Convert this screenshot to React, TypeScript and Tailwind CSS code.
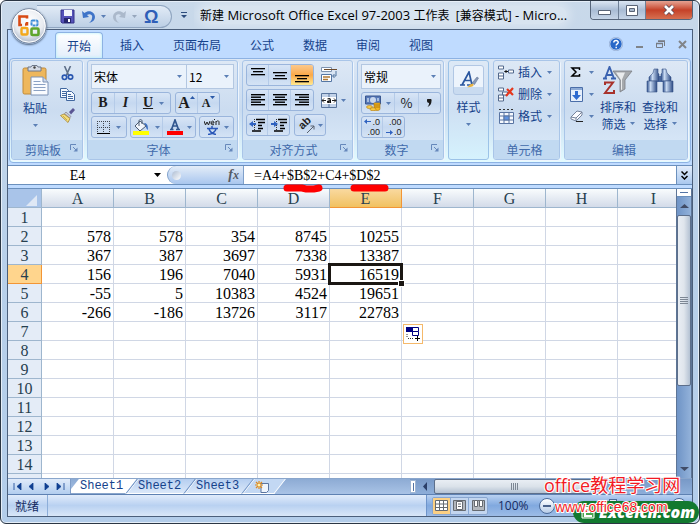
import type { ComponentType, ReactNode } from "react";
import clsx from "clsx";

// --- Sheet data ------------------------------------------------------------------
const columns = ["A", "B", "C", "D", "E", "F", "G", "H", "I"];
const lastRow = 14;
// One spare, unnumbered row runs under the sheet tabs.
const rowNumbers = Array.from({ length: lastRow + 1 }, (_, i) => i + 1);
const cells: Record<number, number[]> = {
  2: [578, 578, 354, 8745, 10255],
  3: [367, 387, 3697, 7338, 13387],
  4: [156, 196, 7040, 5931, 16519],
  5: [-55, 5, 10383, 4524, 19651],
  6: [-266, -186, 13726, 3117, 22783],
};

const ribbonTabs = ["开始", "插入", "页面布局", "公式", "数据", "审阅", "视图"];
const sheetTabs = ["Sheet1", "Sheet2", "Sheet3"];

// --- Small shared pieces ---------------------------------------------------------
function Caret({ className = "text-[#5b7fb5]" }: { className?: string }) {
  return (
    <svg aria-hidden="true" className={clsx("h-[3px] w-[5px] shrink-0", className)} viewBox="0 0 5 3">
      <path d="M0 0h5L2.5 3z" fill="currentColor" />
    </svg>
  );
}

function ToolButton({
  label,
  className,
  children,
}: {
  label: string;
  className?: string;
  children: ReactNode;
}) {
  return (
    <button
      aria-label={label}
      className={clsx("flex h-full items-center justify-center", className)}
      type="button"
    >
      {children}
    </button>
  );
}

function ButtonBar({ children }: { children: ReactNode }) {
  return (
    <div className="flex h-[22px] divide-x divide-[#b5cbe8] overflow-hidden rounded-[3px] border border-[#9ab5dc] bg-linear-to-b from-[#d8e5f6] via-[#c5d8f0] to-[#d4e3f5]">
      {children}
    </div>
  );
}

function Group({
  title,
  launcher = false,
  className,
  children,
}: {
  title: string;
  launcher?: boolean;
  className?: string;
  children: ReactNode;
}) {
  return (
    <section
      className={clsx(
        "flex h-[100px] shrink-0 flex-col overflow-hidden rounded-[3px] border border-[#a9c5e8] bg-linear-to-b from-[#dde8f5] via-[#cbdcf0] to-[#dcebfa] shadow-[1px_1px_0_#eef5fd]",
        className,
      )}
    >
      <div className="min-h-0 flex-1 px-[3px] pt-[3px]">{children}</div>
      <div className="flex h-[19px] items-center bg-[#c1d9f1] pr-1">
        <h2 className={clsx("flex-1 text-center text-[12px] leading-4 text-[#3f6aab]", launcher && "pl-1")}>
          {title}
        </h2>
        {launcher && (
          <button aria-label={`${title}设置`} className="mb-1" type="button">
            <svg className="size-2" viewBox="0 0 8 8" fill="none" stroke="#6688bb">
              <path d="M.5 6V.5H6" />
              <path d="M3 3l3 3" />
              <path d="M7.5 3.5v4h-4z" fill="#6688bb" stroke="none" />
            </svg>
          </button>
        )}
      </div>
    </section>
  );
}

function Combo({ label, value, className }: { label: string; value: string; className?: string }) {
  return (
    <div className={clsx("relative flex h-[25px] border border-[#b3c7e1] bg-[#eaf2fb]", className)}>
      <select
        aria-label={label}
        className="w-full appearance-none bg-transparent pl-0.5 text-[12px] leading-5 text-black outline-none"
        defaultValue={value}
      >
        <option>{value}</option>
      </select>
      <span className="pointer-events-none absolute top-[10px] right-1 flex">
        <Caret />
      </span>
    </div>
  );
}

// --- Icons -----------------------------------------------------------------------
function OfficeLogo() {
  return (
    <svg className="size-9" viewBox="0 0 36 36" fill="none">
      <defs>
        <radialGradient id="orb" cx=".5" cy=".35" r=".7">
          <stop offset="0" stopColor="#fff" />
          <stop offset=".6" stopColor="#e8ebf0" />
          <stop offset="1" stopColor="#98a7bd" />
        </radialGradient>
      </defs>
      <circle cx="18" cy="18" r="17.3" fill="url(#orb)" stroke="#75859d" />
      <circle cx="18" cy="18" r="16.2" stroke="#fff" />
      <path d="M16 10.500V8.500H8.500v8.500h2.500M14 16.500h2V14" stroke="#d84a14" strokeWidth="2.600" />
      <rect x="20.500" y="12.500" width="6" height="5" rx="1" stroke="#3f8ed8" strokeWidth="2" strokeDasharray="3 .6" />
      <rect x="10.500" y="20" width="6" height="6.500" rx="1" stroke="#f3a81c" strokeWidth="2.400" />
      <rect x="20.500" y="20.500" width="7" height="6.500" rx="1" stroke="#5fa52c" strokeWidth="2.600" />
      <path d="M15.500 18.400h5M18.400 15.500v5" stroke="#fff" strokeWidth="1.200" />
    </svg>
  );
}

function SaveIcon() {
  return (
    <svg className="size-[15px]" viewBox="0 0 15 15">
      <path d="M1 1h13v13H2l-1-1z" fill="#5552b8" stroke="#34338a" />
      <path d="M4 1h8v6H4z" fill="#f1f4fb" />
      <path d="M4 9h7v5H4z" fill="#26266e" />
      <path d="M8 10h2v3H8z" fill="#fff" />
    </svg>
  );
}

function UndoIcon({ flip = false }: { flip?: boolean }) {
  return (
    <svg className={clsx("h-[14px] w-[13px]", flip && "-scale-x-100")} viewBox="0 0 13 14">
      <path
        d="M0 1l1 7 6-1-2-2c3-2 6 0 5 3 0 2-1 3-3 5 4-1 6-3 6-6C13 2 7-1 2.500 3z"
        fill={flip ? "#abb9cb" : "#3f74c8"}
      />
    </svg>
  );
}

function PasteIcon() {
  return (
    <svg className="h-[31px] w-[27px]" viewBox="0 0 27 31">
      <rect x="1" y="3" width="23" height="26" rx="1.500" fill="#eeb75c" stroke="#c08a38" />
      <path d="M6 2h3l1-1.500h5L16 2h3v4H6z" fill="#d5dbe5" stroke="#6c7789" />
      <circle cx="12.500" cy="2.500" r="1.200" fill="#444" />
      <path d="M9 12h12l5 5v13H9z" fill="#fafcff" stroke="#7d92b5" />
      <path d="M21 12v5h5" fill="#cdd9ec" stroke="#7d92b5" />
      <path d="M11.500 16.500h7m-7 3h12m-12 3h12m-12 3h12" stroke="#8ca2c4" />
    </svg>
  );
}

function CutIcon() {
  return (
    <svg className="h-[15px] w-[13px]" viewBox="0 0 13 15" fill="none">
      <path d="M3.500 0l4 9M9.500 0l-4 9" stroke="#5f7089" strokeWidth="1.600" />
      <circle cx="3.500" cy="11.300" r="2.200" stroke="#2a57b0" strokeWidth="1.700" />
      <circle cx="9.500" cy="11" r="2.200" stroke="#2a57b0" strokeWidth="1.700" />
    </svg>
  );
}

function CopyIcon() {
  return (
    <svg className="h-[13px] w-[15px]" viewBox="0 0 15 13" stroke="#41679f">
      <path d="M.5.5h6l2 2v7h-8z" fill="#f5f9ff" />
      <path d="M2 3.500h4m-4 2h4m-4 2h4" />
      <path d="M6.500 3.500h5l3 3v6h-8z" fill="#f5f9ff" />
      <path d="M8 6.500h3m-3 2h5m-5 2h5" />
    </svg>
  );
}

function BrushIcon() {
  return (
    <svg className="size-[15px]" viewBox="0 0 15 15">
      <path d="M9 4l4-4 2 2-4 4.500z" fill="#5a5693" />
      <path d="M6 4l5 4.500-1.500 1.500L4.500 5.500z" fill="#c9ccd6" stroke="#76707c" strokeWidth=".6" />
      <path d="M4 6L.5 7.500 8 14.500l2-4z" fill="#f4de7c" stroke="#a88732" strokeWidth=".8" />
      <path d="M3 8l4 4" stroke="#a88732" strokeWidth=".6" />
    </svg>
  );
}

function BorderIcon() {
  return (
    <svg className="size-[13px]" viewBox="0 0 13 13" stroke="#41464f">
      <path d="M0 .5h13M0 6.500h13M.5 0v12M6.500 0v12M12.500 0v12" strokeDasharray="1 1" />
      <path d="M0 12.500h13" stroke="#000" />
    </svg>
  );
}

function FillColorIcon() {
  return (
    <svg className="h-4 w-4" viewBox="0 0 16 16">
      <path d="M7 2l6 5-6 5-5-5z" fill="#f2f6fc" stroke="#4b5a70" />
      <path d="M6 7V2c0-2 3-2 3 0v3" fill="none" stroke="#4b5a70" />
      <path d="M11 4c3 0 4 2 4 7-2-1-2-3-2-4z" fill="#3c6fc0" />
      <path d="M0 12h16v4H0z" fill="#ff0" />
    </svg>
  );
}

function Lines({ widths, offset = 0, align = "left" }: { widths: number[]; offset?: number; align?: string }) {
  return (
    <svg className="h-[15px] w-[14px]" viewBox="0 0 14 15" fill="#000">
      {widths.map((w, i) => (
        <rect
          height={widths.length > 4 ? 1.4 : 1.3}
          key={i}
          width={w}
          x={align === "left" ? 0 : align === "right" ? 14 - w : (14 - w) / 2}
          y={offset + i * (widths.length > 4 ? 2.5 : 3)}
        />
      ))}
    </svg>
  );
}

function IndentIcon({ right = false }: { right?: boolean }) {
  return (
    <svg className="h-[14px] w-4" viewBox="0 0 16 14">
      <path d="M7 1.500h9M9 4.500h7M9 7.500h4M9 10.500h5M3 13h9" stroke="#000" strokeWidth="1.500" />
      <path d="M5.500 1v12" stroke="#333" strokeDasharray="1 1" />
      <path d={right ? "M0 5h3V3l4 3-4 3V7H0z" : "M7 5H4V3L0 6l4 3V7h3z"} fill="#2f62c0" />
    </svg>
  );
}

function OrientationIcon() {
  return (
    <svg className="size-[18px]" viewBox="0 0 18 18">
      <text
        fill="#222"
        fontFamily="Liberation Sans, sans-serif"
        fontSize="11"
        fontWeight="bold"
        transform="rotate(-45 6 14)"
        x="5"
        y="13"
      >
        ab
      </text>
      <path d="M9 17l7-7m0 3.500V10h-3.500" fill="none" stroke="#59616e" />
    </svg>
  );
}

function WrapIcon() {
  return (
    <svg className="size-4" viewBox="0 0 16 16">
      <path d="M.5.5h10v4H.5z" fill="#fff" stroke="#7d93b0" />
      <path d="M3 2.500h13" stroke="#6b4a2c" />
      <path d="M.5 7.500h10v7H.5z" fill="#fff" stroke="#5577a4" />
      <path d="M2 10h7M2 12.500h5" stroke="#b07a36" strokeWidth="1.500" />
      <path d="M15 4v5h-3m1.500-2l-2 2 2 2" fill="none" stroke="#51749e" />
    </svg>
  );
}

function MergeIcon() {
  return (
    <svg className="h-[15px] w-4" viewBox="0 0 16 15">
      <path d="M.5.500h15v14H.5zM8 0v15" fill="#c2d2e8" stroke="#59759d" />
      <path d="M1 4h14v7H1z" fill="#fff" />
      <path d="M1 7.500h4M15 7.500h-4M3 5.500l-2 2 2 2M13 5.500l2 2-2 2" fill="none" stroke="#222" />
      <path d="M6.500 6c3-1 3 0 3 4M9.500 8c-4-.5-4 2.500 0 1" fill="none" stroke="#111" strokeWidth="1.200" />
    </svg>
  );
}

function CurrencyIcon() {
  return (
    <svg className="size-4" viewBox="0 0 16 16">
      <path d="M.5 1h15v8H.5z" fill="#5879b8" stroke="#39578f" />
      <ellipse cx="8" cy="5" rx="3" ry="3" fill="#c8d7ee" />
      <path d="M2 3h2v4H2zM12 3h2v3h-2z" fill="#a9bfe0" />
      <path d="M9 8h6v6c0 2-6 2-6 0z" fill="#f4b721" stroke="#b27b12" strokeWidth=".6" />
      <path d="M9 10h6m-6 2h6" stroke="#b27b12" />
      <ellipse cx="4.500" cy="12" rx="3" ry="1.500" fill="#f8cc47" stroke="#b27b12" strokeWidth=".6" />
      <ellipse cx="8" cy="14.200" rx="3" ry="1.500" fill="#f8cc47" stroke="#b27b12" strokeWidth=".6" />
    </svg>
  );
}

function StylesIcon() {
  return (
    <svg className="h-[18px] w-5" viewBox="0 0 20 18">
      <path d="M1 14h5M8 14h6M3 14L10 1l3 13M6 9.500h6" fill="none" stroke="#2b579f" strokeWidth="1.700" />
      <path d="M13 12l5-6 1.500 1-4 6.500z" fill="#8a9bb8" stroke="#53678c" strokeWidth=".5" />
      <path d="M8 16c2 0 3-4 6-3 2 1-1 4-6 3z" fill="#e8b23f" />
    </svg>
  );
}

function InsertCellsIcon() {
  return (
    <svg className="h-[15px] w-4" viewBox="0 0 16 15" fill="#fff" stroke="#53698c">
      <path d="M.5 1h5v3h-5zM.5 8h5v6h-5zM0 11h6M10.500 5h5v3h-5z" />
      <path d="M10 6.500H6.500M8.500 5L7 6.500 8.500 8" fill="none" stroke="#111" />
    </svg>
  );
}

function DeleteCellsIcon() {
  return (
    <svg className="h-[15px] w-4" viewBox="0 0 16 15" fill="#fff" stroke="#53698c">
      <path d="M.5 1h5v3h-5zM.5 8h5v6h-5zM0 11h6M4.500 5h5v3h-5z" />
      <path d="M9 2l6 6M15 1L8 9" stroke="#e5361c" strokeWidth="2.200" />
    </svg>
  );
}

function FormatCellsIcon() {
  return (
    <svg className="h-4 w-[17px]" viewBox="0 0 17 16" fill="none" stroke="#5974a2">
      <path d="M1 1.500h14" stroke="#333" strokeDasharray="2 2" />
      <path d="M1.500 4.500h14v11h-14z" fill="#f6f9fe" />
      <path d="M1 8h15M1 12h15M6 4v12M11 4v12" />
      <path d="M6 8h5v4H6z" fill="#5f92e0" />
    </svg>
  );
}

function FillDownIcon() {
  return (
    <svg className="h-[15px] w-[13px]" viewBox="0 0 13 15">
      <path d="M.5.5h12v14H.5z" fill="#e6effb" stroke="#4a6ea9" />
      <path d="M1 1h11v2H1z" fill="#8eabd6" />
      <path d="M5 4h3v4h3l-4.500 5L2 8h3z" fill="#2e6bd0" />
    </svg>
  );
}

function EraserIcon() {
  return (
    <svg className="h-3 w-[14px]" viewBox="0 0 14 12">
      <path d="M1 7l6-6 5 1v3l-6 6-5-2z" fill="#fbfcff" stroke="#75829a" />
      <path d="M1 7l5 1 6-6M6 8v3" fill="none" stroke="#75829a" />
      <path d="M6 11.500h7" stroke="#222" />
    </svg>
  );
}

function SortFilterIcon() {
  return (
    <svg className="h-7 w-[30px]" viewBox="0 0 30 28">
      <path d="M0 12.500h4M8 12.500h5M2 12.500L6.500 1l4.500 11.500M4 9h5" fill="none" stroke="#3a62b0" strokeWidth="1.900" />
      <path d="M2 19v-2.500h8L2 27h9v-3" fill="none" stroke="#a8322c" strokeWidth="2" />
      <path d="M10 5h19l-7 9v9l-5 3V14z" fill="#a6a9ad" stroke="#7b7f85" strokeWidth=".8" />
      <path d="M13 6.500h9l-3 7v10l-1 .6V14z" fill="#e9ebed" />
    </svg>
  );
}

function BinocularsIcon() {
  return (
    <svg className="h-[25px] w-7" viewBox="0 0 28 25">
      <defs>
        <linearGradient id="tube" x1="0" x2="1">
          <stop offset="0" stopColor="#2d4f8c" />
          <stop offset=".35" stopColor="#c8daf2" />
          <stop offset="1" stopColor="#2b4a84" />
        </linearGradient>
      </defs>
      <path d="M11 8h6v6h-6z" fill="#4a6aa2" />
      <path d="M8 1h4v4l1 1v7H3V9l4-4z" fill="url(#tube)" stroke="#3a5688" strokeWidth=".6" />
      <path d="M20 1h-4v4l-1 1v7h10V9l-4-4z" fill="url(#tube)" stroke="#3a5688" strokeWidth=".6" />
      <path d="M1 13h10v11H1z" fill="url(#tube)" stroke="#3a5688" strokeWidth=".6" />
      <path d="M17 13h10v11H17z" fill="url(#tube)" stroke="#3a5688" strokeWidth=".6" />
    </svg>
  );
}

// --- Title bar -------------------------------------------------------------------
function TitleBar() {
  return (
    <header className="relative flex h-7 shrink-0 items-start">
      <button
        aria-label="Office 按钮"
        className="absolute top-[7px] left-1 z-20 rounded-full shadow-[0_1px_2px_#51657f]"
        type="button"
      >
        <OfficeLogo />
      </button>
      <div className="mt-1 ml-[30px] flex h-[23px] w-[135px] shrink-0 items-center gap-[7px] rounded-r-full border border-l-0 border-[#8fa5c0] bg-linear-to-b from-[#e2ebf6] to-[#bccfe5] pl-[23px]">
        <ToolButton label="保存"><SaveIcon /></ToolButton>
        <ToolButton className="gap-1.5" label="撤消"><UndoIcon /><Caret /></ToolButton>
        <ToolButton className="gap-1.5" label="恢复"><UndoIcon flip /><Caret className="text-[#96a6bc]" /></ToolButton>
        <ToolButton className="text-[18px] leading-5 font-bold text-[#2f5fb8]" label="符号">
          <span className="font-['Liberation_Sans',sans-serif]">Ω</span>
        </ToolButton>
      </div>
      <ToolButton className="ml-1.5 w-3" label="自定义快速访问工具栏">
        <svg className="size-[6px]" viewBox="0 0 6 6" fill="#2d4c7d"><path d="M0 0h6v1H0zM0 3h6L3 6z" /></svg>
      </ToolButton>
      <h1 className="ml-1 h-7 min-w-0 flex-1 overflow-hidden pl-1.5 text-[13px] leading-7 whitespace-pre text-black font-['Open_Sans','Noto_Sans_CJK_SC',sans-serif]">
        <span className="rounded-full bg-white/30 shadow-[0_0_8px_4px_rgb(255_255_255/0.3)]">
          <span className="text-[12px]">新建</span>
          {" Microsoft Office Excel 97-2003 "}
          <span className="text-[12px]">{"工作表  [兼容模式]"}</span>
          {" - Micro..."}
        </span>
      </h1>
      <div className="flex h-[19px] shrink-0 overflow-hidden rounded-b-[4px] border border-t-0 border-[#56657a]">
        <button aria-label="最小化" className="flex w-7 items-center justify-center border-r border-[#6e7f96] bg-linear-to-b from-[#dbe6f3] via-[#a9bcd4] to-[#c6d5e7]" type="button">
          <svg className="h-3 w-[13px]" viewBox="0 0 13 12"><path d="M.5 6.500h12v4H.5z" fill="#fff" stroke="#5a6577" /></svg>
        </button>
        <button aria-label="还原" className="flex w-[27px] items-center justify-center border-r border-[#6e7f96] bg-linear-to-b from-[#dbe6f3] via-[#a9bcd4] to-[#c6d5e7]" type="button">
          <svg className="h-[11px] w-3" viewBox="0 0 12 11"><path d="M.5.5h11v10H.5z" fill="#fff" stroke="#5a6577" /><path d="M3.500 3.500h5v3h-5z" fill="#a9b9cd" stroke="#5a6577" /></svg>
        </button>
        <button aria-label="关闭" className="flex w-[46px] items-center justify-center bg-linear-to-b from-[#e5a292] via-[#c54128] to-[#d66f50]" type="button">
          <svg className="h-3 w-[14px]" viewBox="0 0 14 12"><path d="M3 2l8 8M11 2l-8 8" stroke="#5d4550" strokeWidth="4.500" /><path d="M3 2l8 8M11 2l-8 8" stroke="#fff" strokeWidth="2.700" /></svg>
        </button>
      </div>
    </header>
  );
}

function RibbonTabs() {
  return (
    <nav className="flex h-7 shrink-0 items-end bg-[#bfdbff] pl-[47px] text-[12px] text-[#15428b]">
      {ribbonTabs.map((tab, i) => (
        <button
          className={clsx(
            "h-[26px] leading-6",
            i === 0
              ? "mr-[3px] rounded-t-[4px] border border-b-0 border-[#8db2e3] bg-linear-to-b from-white to-[#e3eefb] px-[11px] shadow-[inset_0_0_3px_#a9f0fa]"
              : "mr-px px-[14px]",
          )}
          key={tab}
          type="button"
        >
          {tab}
        </button>
      ))}
      <div className="mr-[5px] ml-auto flex h-7 items-center gap-[13px]">
        <button aria-label="帮助" type="button">
          <svg className="size-[14px]" viewBox="0 0 14 14"><circle cx="7" cy="7" r="6.300" fill="#2868c8" stroke="#fff" /><circle cx="7" cy="7" r="6.700" fill="none" stroke="#5d83bd" strokeWidth=".5" /><path d="M4.800 5.500c0-3 4.600-2.500 4.400 0C9 7 7.200 6.800 7.200 8.500M7.200 9.800v1.500" fill="none" stroke="#fff" strokeWidth="1.500" /></svg>
        </button>
        <button aria-label="最小化窗口" type="button">
          <svg className="h-2 w-[7px]" viewBox="0 0 7 8"><path d="M0 7h7" stroke="#808489" strokeWidth="2" /></svg>
        </button>
        <button aria-label="还原窗口" type="button">
          <svg className="size-[9px]" viewBox="0 0 9 9" fill="none" stroke="#777b82"><path d="M2 1.500h6.500V6M.5 3.500h6v4h-6z" /><path d="M2 1h7M0 3.500h7" strokeWidth="1.500" /></svg>
        </button>
        <button aria-label="关闭窗口" type="button">
          <svg className="size-[9px]" viewBox="0 0 9 9"><path d="M1 1l7 7M8 1L1 8" stroke="#808489" strokeWidth="2" /></svg>
        </button>
      </div>
    </nav>
  );
}

// --- Ribbon ----------------------------------------------------------------------
type CellAction = { label: string; icon: ComponentType };

const cellActions: CellAction[] = [
  { label: "插入", icon: InsertCellsIcon },
  { label: "删除", icon: DeleteCellsIcon },
  { label: "格式", icon: FormatCellsIcon },
];

function Ribbon() {
  return (
    <div className="mx-px flex h-[105px] shrink-0 gap-1 overflow-hidden rounded-[4px] border border-[#8db2e3] bg-linear-to-b from-[#dbe7f5] via-[#c9dbf0] to-[#e3fbff] px-px pt-px">
      <Group className="w-[72px]" launcher title="剪贴板">
        <div className="flex h-full justify-between pr-1">
          <button className="flex w-10 flex-col items-center pt-px text-[12px] leading-4 text-[#15428b]" type="button">
            <PasteIcon />
            <span className="mt-1 mb-2">粘贴</span>
            <Caret />
          </button>
          <div className="flex w-4 flex-col items-center gap-[7px] pt-0.5">
            <button aria-label="剪切" type="button"><CutIcon /></button>
            <button aria-label="复制" type="button"><CopyIcon /></button>
            <button aria-label="格式刷" type="button"><BrushIcon /></button>
          </div>
        </div>
      </Group>

      <Group className="w-[151px]" launcher title="字体">
        <div className="flex flex-col gap-[2px]">
          <div className="flex">
            <Combo className="w-24" label="字体" value="宋体" />
            <Combo className="-ml-px w-12" label="字号" value="12" />
          </div>
          <div className="flex gap-1 pt-px font-['Liberation_Serif',serif] text-[14px] leading-5 text-[#1c1c1c]">
            <ButtonBar>
              <ToolButton className="w-[23px] font-bold" label="加粗">B</ToolButton>
              <ToolButton className="w-[22px] font-bold italic" label="倾斜">I</ToolButton>
              <ToolButton className="w-[33px] gap-1.5 font-bold underline" label="下划线">U<Caret /></ToolButton>
            </ButtonBar>
            <ButtonBar>
              <ToolButton className="w-[22px] text-[16px] font-bold" label="增大字号">
                A<svg className="mb-3 h-[3px] w-[5px]" viewBox="0 0 5 3"><path d="M0 3h5L2.500 0z" fill="#2c5aa8" /></svg>
              </ToolButton>
              <ToolButton className="w-[21px] text-[12px] font-bold" label="减小字号">
                A<svg className="mb-3 h-[3px] w-[5px]" viewBox="0 0 5 3"><path d="M0 0h5L2.500 3z" fill="#2c5aa8" /></svg>
              </ToolButton>
            </ButtonBar>
          </div>
          <div className="flex gap-[3px]">
            <ButtonBar>
              <ToolButton className="w-[34px] gap-1.5" label="边框"><BorderIcon /><Caret /></ToolButton>
            </ButtonBar>
            <ButtonBar>
              <ToolButton className="w-8 gap-1.5" label="填充颜色"><FillColorIcon /><Caret /></ToolButton>
              <ToolButton className="w-8 gap-1" label="字体颜色">
                <svg className="size-4" viewBox="0 0 16 16"><path d="M3 10.500h3.500M9 10.500h4M4.500 10.500L8 1l3.500 9.500M6 7h5" fill="none" stroke="#31568f" strokeWidth="1.700" /><path d="M0 12h16v4H0z" fill="red" /></svg>
                <Caret />
              </ToolButton>
            </ButtonBar>
            <ButtonBar>
              <ToolButton className="w-[33px] gap-1" label="拼音">
                <svg className="size-4" viewBox="0 0 16 16" fill="none"><path d="M0 2l1.500 4L3 3l1.500 3L6 2M7 4h3c0-3-3-2-3 0s2 2 3 1.500M10 1l1-1M12 6V2M12 3c2-2 3-1 3 0v3" stroke="#222" /><path d="M8 7v2M3 9.500h11M5 10c1 3 4 5 7 5.500M12 10c-1 3-4 5-8 5.500" stroke="#2a57b8" strokeWidth="1.500" /></svg>
                <Caret />
              </ToolButton>
            </ButtonBar>
          </div>
        </div>
      </Group>

      <Group className="w-[111px]" launcher title="对齐方式">
        <div className="flex flex-col gap-[3px]">
          <div className="flex items-center gap-[7px]">
            <ButtonBar>
              <ToolButton className="w-[22px]" label="顶端对齐"><Lines align="center" offset={0} widths={[14, 10, 14]} /></ToolButton>
              <ToolButton className="w-[22px]" label="垂直居中"><Lines align="center" offset={4} widths={[14, 10, 14]} /></ToolButton>
              <ToolButton className="w-[22px] bg-linear-to-b from-[#fbc98c] via-[#fba947] to-[#ffe98f]" label="底端对齐"><Lines align="center" offset={7} widths={[14, 10, 14]} /></ToolButton>
            </ButtonBar>
            <button aria-label="自动换行" type="button"><WrapIcon /></button>
          </div>
          <div className="flex items-center gap-[7px]">
            <ButtonBar>
              <ToolButton className="w-[22px]" label="文本左对齐"><Lines offset={1} widths={[14, 10, 14, 10, 14]} /></ToolButton>
              <ToolButton className="w-[22px]" label="居中"><Lines align="center" offset={1} widths={[14, 10, 14, 10, 14]} /></ToolButton>
              <ToolButton className="w-[22px]" label="文本右对齐"><Lines align="right" offset={1} widths={[14, 10, 14, 10, 14]} /></ToolButton>
            </ButtonBar>
            <button aria-label="合并后居中" className="flex items-center gap-1" type="button"><MergeIcon /><Caret /></button>
          </div>
          <div className="flex gap-1">
            <ButtonBar>
              <ToolButton className="w-[21px]" label="减少缩进量"><IndentIcon /></ToolButton>
              <ToolButton className="w-[21px]" label="增加缩进量"><IndentIcon right /></ToolButton>
            </ButtonBar>
            <ButtonBar>
              <ToolButton className="w-[30px] gap-0.5" label="方向"><OrientationIcon /><Caret /></ToolButton>
            </ButtonBar>
          </div>
        </div>
      </Group>

      <Group className="w-[87px]" launcher title="数字">
        <div className="flex flex-col items-start gap-[2px]">
          <Combo className="w-20" label="数字格式" value="常规" />
          <div className="pt-px">
            <ButtonBar>
              <ToolButton className="w-[33px] gap-[5px]" label="会计数字格式"><CurrencyIcon /><Caret /></ToolButton>
              <ToolButton className="w-6 text-[13px] leading-4 text-[#222]" label="百分比样式">%</ToolButton>
              <ToolButton className="w-[21px]" label="千位分隔样式">
                <svg className="h-2 w-[5px]" viewBox="0 0 5 8"><path d="M0 2a2.300 2 0 1 1 4.500 0C4.500 5 3 7 .5 8 2 6 2 5 2 4 1 4 0 3 0 2z" fill="#1c1c1c" /></svg>
              </ToolButton>
            </ButtonBar>
          </div>
          <ButtonBar>
            <ToolButton className="w-[21px]" label="增加小数位数">
              <span className="relative flex w-4 flex-col items-end text-[9px] leading-[10px] text-[#222] font-['Liberation_Sans',sans-serif]">
                <span>.0</span>
                <span>.00</span>
                <svg className="absolute top-0.5 left-0 h-[5px] w-[7px]" viewBox="0 0 7 5"><path d="M7 2H3V0L0 2.500 3 5V3h4z" fill="#2f62c0" /></svg>
              </span>
            </ToolButton>
            <ToolButton className="w-[21px]" label="减少小数位数">
              <span className="relative flex w-4 flex-col items-end text-[9px] leading-[10px] text-[#222] font-['Liberation_Sans',sans-serif]">
                <span>.00</span>
                <span>.0</span>
                <svg className="absolute bottom-0.5 left-0 h-[5px] w-[7px]" viewBox="0 0 7 5"><path d="M0 2h4V0l3 2.500L4 5V3H0z" fill="#2f62c0" /></svg>
              </span>
            </ToolButton>
          </ButtonBar>
        </div>
      </Group>

      <button
        className="flex h-[100px] w-[41px] shrink-0 flex-col items-center rounded-[3px] border border-[#9cc3e8] bg-linear-to-b from-[#dde9f6] via-[#cfe0f3] to-[#d5f2fd] pt-1 text-[12px] leading-4 text-[#15428b]"
        type="button"
      >
        <span className="flex h-[30px] w-[31px] items-center justify-center rounded-[3px] border border-[#b1c7e4] bg-linear-to-b from-[#edf4fc] from-75% to-[#c9dbf0] to-75%">
          <StylesIcon />
        </span>
        <span className="mt-1 mb-2">样式</span>
        <Caret />
      </button>

      <Group className="w-[67px]" title="单元格">
        <div className="flex flex-col gap-[6px] pl-px text-[12px] leading-4 text-[#15428b]">
          {cellActions.map(({ label, icon: Icon }) => (
            <button className="flex h-4 items-center gap-[3px]" key={label} type="button">
              <span className="w-[17px]"><Icon /></span>
              {label}
              <span className="ml-0.5"><Caret /></span>
            </button>
          ))}
        </div>
      </Group>

      <Group className="w-[124px]" title="编辑">
        <div className="flex gap-1.5 pl-0.5 text-[12px] leading-[17px] text-[#15428b]">
          <div className="flex w-6 flex-col gap-[6px]">
            <button aria-label="自动求和" className="flex h-4 items-center justify-between" type="button">
              <svg className="h-[10px] w-[11px]" viewBox="0 0 11 10"><path d="M9.500 3V1H2l4 4-4 4h7.500V7" fill="none" stroke="#000" strokeWidth="1.500" /></svg>
              <Caret />
            </button>
            <button aria-label="填充" className="flex h-4 items-center justify-between" type="button"><FillDownIcon /><Caret /></button>
            <button aria-label="清除" className="flex h-4 items-center justify-between" type="button"><EraserIcon /><Caret /></button>
          </div>
          <button className="flex w-9 flex-col items-center pt-0.5" type="button">
            <span className="mb-1 h-7"><SortFilterIcon /></span>
            <span>排序和</span>
            <span className="flex items-center gap-1">筛选<Caret /></span>
          </button>
          <button className="flex w-9 flex-col items-center pt-0.5" type="button">
            <span className="mb-1 h-7 pt-0.5"><BinocularsIcon /></span>
            <span>查找和</span>
            <span className="flex items-center gap-1">选择<Caret /></span>
          </button>
        </div>
      </Group>
    </div>
  );
}

// --- Formula bar -----------------------------------------------------------------
function FormulaBar() {
  return (
    <div className="relative mt-0.5 flex h-5 shrink-0 border-y border-[#6b90bd] bg-white font-['Liberation_Serif',serif] text-[14px]">
      <input aria-label="名称框" className="w-[139px] text-center outline-none" defaultValue="E4" />
      <button aria-label="名称列表" className="flex w-5 items-center justify-center" type="button">
        <svg className="h-1 w-[7px]" viewBox="0 0 7 4"><path d="M0 0h7L3.500 4z" /></svg>
      </button>
      <div className="flex w-[77px] items-center justify-between rounded-l-full border-r border-l border-[#7fa0cb] bg-linear-to-b from-[#e4edf8] to-[#a9c6ee] pr-1 pl-1">
        <span className="size-[9px] rounded-full bg-linear-to-br from-[#aebdd2] to-white" />
        <button aria-label="插入函数" className="text-[14px] leading-4 font-bold text-[#555b66] italic" type="button">
          f<span className="text-[12px]">x</span>
        </button>
      </div>
      <input aria-label="编辑栏" className="min-w-0 flex-1 pl-2.5 outline-none" defaultValue="=A4+$B$2+C4+$D$2" />
      <button aria-label="展开编辑栏" className="flex w-4 items-center justify-center border-l border-[#6b90bd] bg-linear-to-b from-[#e2edfb] to-[#aac8ee]" type="button">
        <svg className="h-[9px] w-[7px]" viewBox="0 0 7 9" fill="none" stroke="#000" strokeWidth="1.500"><path d="M.5.500l3 3 3-3M.5 5l3 3 3-3" /></svg>
      </button>
      {/* Marker strokes under the absolute references */}
      <svg aria-hidden="true" className="pointer-events-none absolute top-[17px] left-[274px] z-20 h-[11px] w-[110px]" viewBox="0 0 110 11" fill="none" stroke="red" strokeLinecap="round" strokeWidth="7">
        <path d="M5 5h15l4 1h8l5-1M72 5h31" />
      </svg>
    </div>
  );
}

// --- Sheet -----------------------------------------------------------------------
function Sheet() {
  return (
    <div className="mt-[3px] flex min-h-0 flex-1 border-t border-[#6b90bd] bg-white">
      <div className="min-w-0 flex-1 overflow-hidden">
        <table className="w-[682px] table-fixed border-separate border-spacing-0 font-['Liberation_Serif',serif] text-[16px] leading-4">
          <thead>
            <tr className="h-[19px]">
              <th className="w-[34px] border-r border-b border-[#9eb6ce] bg-[#a9c4e9] p-0">
                <svg aria-label="全选" className="mt-1 mr-1 ml-auto size-[11px]" viewBox="0 0 11 11"><path d="M11 0v11H0z" fill="#dfe8f5" /></svg>
              </th>
              {columns.map((c) => (
                <th
                  className={clsx(
                    "w-[72px] border-r border-b p-0 pt-0.5 font-normal text-[#273f4f]",
                    c === "E"
                      ? "border-[#f29536] bg-linear-to-b from-[#f9d99f] to-[#f1c15f]"
                      : "border-[#9eb6ce] bg-linear-to-b from-[#f9fcfd] to-[#d3dbe9]",
                  )}
                  key={c}
                  scope="col"
                >
                  {c}
                </th>
              ))}
            </tr>
          </thead>
          <tbody>
            {rowNumbers.map((r) => (
              <tr className="h-[19px]" key={r}>
                <th
                  className={clsx(
                    "border-r border-b p-0 pt-0.5 text-center font-normal text-[#273f4f]",
                    r === 4 ? "border-[#f29536] bg-[#ffd58d]" : "border-[#9eb6ce] bg-[#e4ecf7]",
                  )}
                  scope="row"
                >
                  {r <= lastRow && r}
                </th>
                {columns.map((c, i) => (
                  <td className="relative border-r border-b border-[#d0d7e5] p-0 pt-0.5 pr-0.5 text-right text-black" key={c}>
                    {cells[r]?.[i]}
                    {r === 4 && c === "E" && (
                      <span className="absolute -inset-0.5 z-10 border-[3px] border-[#1b1713]">
                        <span className="absolute -right-1 -bottom-1 size-[5px] bg-[#1b1713] outline outline-white" />
                      </span>
                    )}
                    {r === 7 && c === "F" && (
                      <button aria-label="自动填充选项" className="absolute top-0.5 left-px z-10 size-5 border border-[#f5b96b] bg-white" type="button">
                        <svg className="size-[18px]" viewBox="0 0 18 18" fill="none">
                          <path d="M2.500 2.500h12v4h-12zM8.500 2v8.500h6v-4" stroke="#000080" />
                          <path d="M2 2h7v5H2z" fill="#000080" />
                          <path d="M3 9v4M4 13.500h6" stroke="#333" strokeDasharray="1 1" />
                          <path d="M11 13.500h5M13.500 11v5" stroke="#000" />
                        </svg>
                      </button>
                    )}
                  </td>
                ))}
              </tr>
            ))}
          </tbody>
        </table>
      </div>
      {/* Vertical scroll bar */}
      <div className="flex w-4 shrink-0 flex-col border-x border-[#5d7596] bg-linear-to-r from-[#6f94c6] to-[#93b2da]">
        <div className="flex h-2 shrink-0 items-center border-b border-[#6b90bd] bg-white px-[3px]"><span className="h-px w-full bg-[#5575a5]" /></div>
        <button aria-label="向上滚动" className="flex h-[18px] shrink-0 items-center justify-center" type="button">
          <svg className="h-1 w-[9px]" viewBox="0 0 9 4"><path d="M0 4h9L4.500 0z" fill="#414c66" /></svg>
        </button>
        <div className="flex h-[171px] shrink-0 items-center justify-center rounded-[2px] border border-[#5d6f8b] bg-linear-to-r from-[#e9eef4] via-[#dfe5ec] to-[#b4c2d3]">
          <span className="flex w-2 flex-col gap-px">
            {[0, 1, 2, 3].map((n) => <i className="h-px bg-[#7d8794]" key={n} />)}
          </span>
        </div>
        <button aria-label="向下滚动" className="mt-auto flex h-[18px] shrink-0 items-center justify-center" type="button">
          <svg className="h-1 w-[9px]" viewBox="0 0 9 4"><path d="M0 0h9L4.500 4z" fill="#414c66" /></svg>
        </button>
      </div>
    </div>
  );
}

function SheetTabs() {
  return (
    <div className="flex h-4 shrink-0 overflow-hidden border-t border-[#8aa6cc] bg-linear-to-b from-[#8dabd4] to-[#a9c3e6]">
      <div className="z-10 flex w-[63px] shrink-0 items-center justify-between border-r border-[#7f9dc8] bg-linear-to-b from-[#e0ebfa] to-[#b3ceef] px-[5px]">
        {["M1 0v7M8 0v7L4 3.500z", "M6 0v7L2 3.500z", "M3 0v7l4-3.500z", "M1 0v7l4-3.500zM8 0v7"].map((d, i) => (
          <button aria-label={["第一张", "上一张", "下一张", "最后一张"][i]} key={d} type="button">
            <svg className="h-[7px] w-[9px]" viewBox="0 0 9 7"><path d={d} fill="#103f91" stroke="#103f91" strokeWidth=".8" /></svg>
          </button>
        ))}
      </div>
      {sheetTabs.map((tab, i) => (
        <button className="relative w-[58px] shrink-0 pl-[9px] text-left font-['Liberation_Mono',monospace] text-[12px] leading-[15px] text-[#15428b]" key={tab} type="button">
          <span
            className={clsx(
              "absolute inset-y-0 left-0.5 w-[58px] -skew-x-[38deg] border-b",
              i === 0
                ? "border-b-[#8aa6cc] bg-white"
                : "border-l border-b-white border-l-[#6f92c4] bg-linear-to-b from-[#b5cef0] to-[#dbe8f9] shadow-[inset_1px_0_0_white]",
            )}
          />
          <span className="relative">{tab}</span>
        </button>
      ))}
      <button aria-label="插入工作表" className="relative flex w-10 shrink-0 items-center pl-2.5" type="button">
        <span className="absolute inset-y-0 left-0.5 w-[33px] -skew-x-[38deg] border-r border-b border-l border-white border-l-[#6f92c4] bg-[#c3d8f3] shadow-[inset_1px_0_0_white]" />
        <svg className="relative h-3 w-[15px]" viewBox="0 0 15 12">
          <path d="M6 2.500h7.500v7l-2 2H6z" fill="#eef4fc" stroke="#5b759f" />
          <path d="M4 0v8M0 4h8M1 1l6 6M7 1L1 7" stroke="#e08a1c" strokeWidth="1.200" />
          <circle cx="4" cy="4" r="1.500" fill="#fff3b0" />
        </svg>
      </button>
      {/* Horizontal scroll bar */}
      <div className="ml-auto flex w-[282px] shrink-0 bg-linear-to-b from-[#7899c7] to-[#8eaed9] pr-4">
        <div className="my-px flex w-[6px] items-center justify-center border border-[#9fb6d4] bg-white"><span className="h-2 w-px bg-[#5575a5]" /></div>
        <button aria-label="向左滚动" className="flex w-[18px] items-center justify-center" type="button">
          <svg className="h-[9px] w-1" viewBox="0 0 4 9"><path d="M4 0v9L0 4.500z" fill="#2b3f68" /></svg>
        </button>
        <div className="flex w-40 items-center justify-center rounded-[2px] border border-[#5d6f8b] bg-linear-to-b from-[#e9eef4] via-[#dbe2ea] to-[#b4c2d3]">
          <span className="flex gap-px">
            {[0, 1, 2, 3].map((n) => <i className="h-[7px] w-px bg-[#7d8794]" key={n} />)}
          </span>
        </div>
        <button aria-label="向右滚动" className="ml-auto flex w-[18px] items-center justify-center" type="button">
          <svg className="h-[9px] w-1" viewBox="0 0 4 9"><path d="M0 0v9l4-4.500z" fill="#2b3f68" /></svg>
        </button>
      </div>
    </div>
  );
}

function StatusBar() {
  return (
    <footer className="flex h-[22px] shrink-0 border-t border-[#5e81b2] bg-linear-to-b from-[#e1ecfb] via-[#b9d1f1] to-[#d9e7f8] text-[12px] text-[#152b62]">
      <span className="flex w-10 items-center justify-end border-r border-[#8daed9] pr-2 leading-4">就绪</span>
      <div className="ml-auto flex w-[266px] items-center gap-2.5 border-l border-[#6e94ca] bg-linear-to-b from-[#b9d1f1] via-[#81a9df] to-[#9dbce6] pl-[5px]">
        <div className="flex h-[18px] divide-x divide-[#8aaad4] overflow-hidden rounded-[2px] border border-[#88a5ce] bg-[#c3d6ef]">
          <ToolButton className="w-[18px] bg-[#fcd083]" label="普通">
            <svg className="h-[11px] w-[13px]" viewBox="0 0 13 11" fill="#fff" stroke="#656a70"><path d="M.5.500h12v10H.5zM0 4h13M0 7.500h13M4.500 0v11M8.500 0v11" /></svg>
          </ToolButton>
          <ToolButton className="w-[18px]" label="页面布局">
            <svg className="h-[11px] w-[13px]" viewBox="0 0 13 11" fill="#b2b7bd" stroke="#656a70"><path d="M.5.500h12v10H.5z" /><path d="M3.500 1.500h6v8h-6zM5 4h3M5 6.500h3" fill="#fff" /></svg>
          </ToolButton>
          <ToolButton className="w-[18px]" label="分页预览">
            <svg className="h-[11px] w-[13px]" viewBox="0 0 13 11" fill="#b2b7bd" stroke="#656a70"><path d="M.5.500h12v10H.5z" /><path d="M2.500.500h3v6h-3zM7.500.500h3v6h-3z" fill="#fff" /></svg>
          </ToolButton>
        </div>
        <span className="font-['Open_Sans',sans-serif] text-[12px] leading-4">100%</span>
        <button aria-label="缩小" className="flex size-4 shrink-0 items-center justify-center rounded-full border border-[#4b6a99] bg-linear-to-b from-white to-[#b7cce8]" type="button">
          <span className="h-0.5 w-2 bg-[#4a628b]" />
        </button>
        <input
          aria-label="显示比例"
          className="h-4 w-24 min-w-0 appearance-none bg-transparent [&::-webkit-slider-runnable-track]:h-px [&::-webkit-slider-runnable-track]:bg-[#46669b] [&::-webkit-slider-thumb]:-mt-1.5 [&::-webkit-slider-thumb]:h-3 [&::-webkit-slider-thumb]:w-2 [&::-webkit-slider-thumb]:appearance-none [&::-webkit-slider-thumb]:border [&::-webkit-slider-thumb]:border-[#4b6a99] [&::-webkit-slider-thumb]:bg-[#e5eefa]"
          defaultValue={50}
          type="range"
        />
        <button aria-label="放大" className="size-4 shrink-0 rounded-full border border-[#4b6a99] bg-linear-to-b from-white to-[#b7cce8]" type="button" />
      </div>
    </footer>
  );
}

// Site marks stamped over the lower right corner of the window.
function Watermark() {
  return (
    <div className="pointer-events-none absolute right-0 bottom-0 z-30 h-[46px] w-[165px]">
      <div className="absolute right-0 bottom-0 flex h-[22px] w-[126px] items-center justify-end gap-1 rounded-full bg-[#12792f] pr-1">
        <svg className="h-4 w-[14px]" viewBox="0 0 14 16"><path d="M1 2l12-1v13H1z" fill="#4aa54f" stroke="#fff" /><path d="M10 4H4v8h7M4 8h5" fill="none" stroke="#fff" strokeWidth="2" /></svg>
        <span className="font-['Open_Sans',sans-serif] text-[16px] leading-5 font-extrabold text-white italic">Excelcn.com</span>
      </div>
      <p className="absolute -top-1 left-2.5 text-[18px] leading-6 whitespace-nowrap text-[#f21a24] [paint-order:stroke_fill] [-webkit-text-stroke:2px_white] font-['Open_Sans','Noto_Sans_CJK_SC',sans-serif]">
        office教程学习网
      </p>
      <p className="absolute top-[22px] left-[21px] text-[14px] leading-4 whitespace-nowrap text-[#f21a24] [paint-order:stroke_fill] [-webkit-text-stroke:2px_white] font-['Liberation_Sans',sans-serif]">
        www.office68.com
      </p>
    </div>
  );
}

export default function App() {
  return (
    <div className="relative flex h-screen flex-col overflow-hidden rounded-[6px] border border-[#2b3644] bg-linear-to-b from-[#c9d9ea] via-[#b8d0ea] to-[#b3cdea] px-1.5 pb-1.5 font-['Noto_Sans_CJK_SC',sans-serif] shadow-[inset_0_0_0_1px_#e5eef8]">
      <TitleBar />
      <main className="flex min-h-0 flex-1 flex-col border border-[#4b5f7b] bg-[#bfdbff]">
        <RibbonTabs />
        <Ribbon />
        <FormulaBar />
        <Sheet />
        <SheetTabs />
        <StatusBar />
      </main>
      <Watermark />
    </div>
  );
}
